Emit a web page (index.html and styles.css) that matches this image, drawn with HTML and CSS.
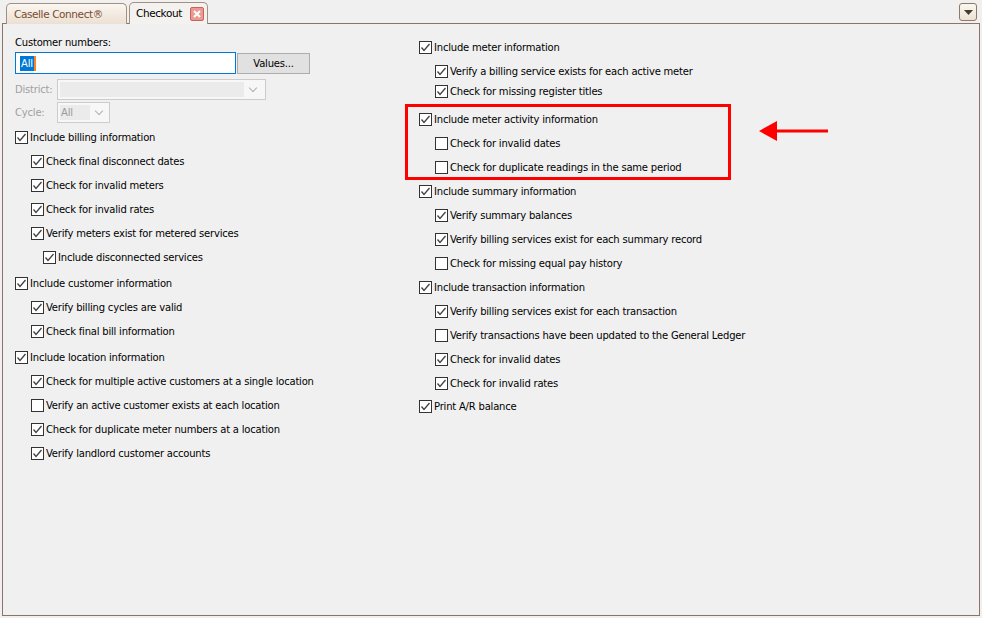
FILE: index.html
```html
<!DOCTYPE html>
<html lang="en">
<head>
    <meta charset="UTF-8">
    <title>Checkout</title>
    <link rel="stylesheet" href="styles.css">
</head>
<body>
    <div class="tabstrip">
        <div class="tab">Caselle Connect®</div>
        <div class="tab active">
            Checkout
            <svg class="close" width="14" height="14" viewBox="0 0 14 14">
                <rect x="0.5" y="0.5" width="13" height="13" rx="1.5" fill="#eb9a93" stroke="#c4645c"/>
                <path d="M4 4 L10 10 M10 4 L4 10" stroke="#fff" stroke-width="2"/>
            </svg>
        </div>
        <div class="menu-btn">
            <svg width="9" height="6" viewBox="0 0 9 6"><path d="M0 0 H9 L4.5 5 Z" fill="#4a3a30"/></svg>
        </div>
    </div>

    <div class="panel">
        <div class="col left">
            <div class="field-label">Customer numbers:</div>
            <div class="input-row">
                <div class="textbox"><span class="sel">All</span><span class="caret"></span></div>
                <button class="btn">Values...</button>
            </div>
            <div class="combo-row district">
                <span class="dim">District:</span>
                <div class="combo wide"><div class="combo-fill"></div><span class="chev"></span></div>
            </div>
            <div class="combo-row cycle">
                <span class="dim">Cycle:</span>
                <div class="combo small"><div class="combo-fill">All</div><span class="chev"></span></div>
            </div>

            <div class="checks">
                <label class="chk on">Include billing information</label>
                <label class="chk on l1">Check final disconnect dates</label>
                <label class="chk on l1">Check for invalid meters</label>
                <label class="chk on l1">Check for invalid rates</label>
                <label class="chk on l1">Verify meters exist for metered services</label>
                <label class="chk on l2">Include disconnected services</label>
                <label class="chk on group">Include customer information</label>
                <label class="chk on l1">Verify billing cycles are valid</label>
                <label class="chk on l1">Check final bill information</label>
                <label class="chk on group">Include location information</label>
                <label class="chk on l1">Check for multiple active customers at a single location</label>
                <label class="chk l1">Verify an active customer exists at each location</label>
                <label class="chk on l1">Check for duplicate meter numbers at a location</label>
                <label class="chk on l1">Verify landlord customer accounts</label>
            </div>
        </div>

        <div class="col right">
            <label class="chk on">Include meter information</label>
            <label class="chk on l1">Verify a billing service exists for each active meter</label>
            <label class="chk on l1 tight">Check for missing register titles</label>
            <label class="chk on wide-gap">Include meter activity information</label>
            <label class="chk l1">Check for invalid dates</label>
            <label class="chk l1">Check for duplicate readings in the same period</label>
            <label class="chk on">Include summary information</label>
            <label class="chk on l1">Verify summary balances</label>
            <label class="chk on l1">Verify billing services exist for each summary record</label>
            <label class="chk l1">Check for missing equal pay history</label>
            <label class="chk on">Include transaction information</label>
            <label class="chk on l1">Verify billing services exist for each transaction</label>
            <label class="chk l1">Verify transactions have been updated to the General Ledger</label>
            <label class="chk on l1">Check for invalid dates</label>
            <label class="chk on l1">Check for invalid rates</label>
            <label class="chk on last">Print A/R balance</label>
        </div>

        <!-- annotation drawn over the form -->
        <div class="highlight"></div>
        <svg class="arrow" width="72" height="22" viewBox="0 0 72 22">
            <path d="M16 11 H70" stroke="#ff0000" stroke-width="3"/>
            <path d="M1 11 L19 1 V21 Z" fill="#ff0000"/>
        </svg>
    </div>
</body>
</html>
```

FILE: styles.css
```css
body {
    margin: 0;
    background-color: #f0f0f0;
    font-family: "DejaVu Sans", Verdana, sans-serif;
    font-size: 10px;
    letter-spacing: -0.2px;
    color: #000;
}

.tabstrip {
    display: flex;
    align-items: flex-end;
    height: 23px;
    padding-left: 6px;
    gap: 2px;
}

.tab {
    position: relative;
    z-index: 1;
    height: 19px;
    margin-bottom: -1px;
    padding: 0 0 1px 7px;
    display: flex;
    align-items: center;
    font-size: 10.5px;
    letter-spacing: -0.4px;
    color: #7a4b33;
    background: linear-gradient(#faf6f0, #ebe0d2);
    border: 1px solid #a48f80;
    border-bottom: none;
    border-radius: 5px 5px 0 0;
    width: 112px;
}

.tab.active {
    width: auto;
    height: 20px;
    padding: 0 3px 1px 6px;
    color: #000;
    background: #f4f2ef;
}

.tab .close {
    margin-left: 8px;
    margin-top: 2px;
}

.menu-btn {
    margin-left: auto;
    margin-right: 5px;
    margin-bottom: 2px;
    width: 16px;
    height: 16px;
    display: flex;
    align-items: center;
    justify-content: center;
    background: linear-gradient(#fbf7f0, #ece2d3);
    border: 1px solid #8e786a;
    border-radius: 3px;
}

.menu-btn svg {
    margin-top: 1px;
}

.panel {
    position: relative;
    display: flex;
    margin-left: 2px;
    width: 964px;
    height: 591px;
    border: 1px solid #8c7565;
    padding: 0 0 0 12px;
}

.col {
    display: flex;
    flex-direction: column;
}

.left {
    width: 404px;
    padding-top: 12px;
}

.right {
    padding-top: 13px;
    gap: 4px;
}

.field-label {
    height: 14px;
    line-height: 14px;
}

.input-row {
    display: flex;
    margin-top: 2px;
    height: 22px;
}

.textbox {
    width: 215px;
    height: 20px;
    border: 1px solid #0078d7;
    background: #fff;
    display: flex;
    align-items: center;
    padding-left: 4px;
}

.sel {
    background: #0078d7;
    color: #fff;
    line-height: 15px;
    padding: 0 1px;
}

.caret {
    width: 2px;
    height: 15px;
    background: #f08a24;
}

.btn {
    margin-left: 1px;
    margin-top: 1px;
    width: 73px;
    height: 21px;
    background: #e1e1e1;
    border: 1px solid #adadad;
    font-family: inherit;
    font-size: inherit;
    letter-spacing: inherit;
    color: #000;
    padding: 0;
}

.combo-row {
    display: flex;
    align-items: center;
    height: 21px;
    margin-top: 2px;
}

.combo-row.district {
    margin-top: 5px;
}

.dim {
    width: 42px;
    color: #a0a0a0;
}

.combo {
    height: 19px;
    border: 1px solid #cccccc;
    background: #f7f7f7;
    display: flex;
    align-items: center;
    padding-left: 2px;
}

.combo.wide {
    width: 205px;
}

.combo.small {
    width: 49px;
}

.combo-fill {
    background: #ebebeb;
    height: 15px;
    line-height: 15px;
    color: #9a9a9a;
    padding-left: 1px;
}

.wide .combo-fill {
    width: 183px;
}

.small .combo-fill {
    width: 29px;
}

.chev {
    width: 5px;
    height: 5px;
    border-right: 1px solid #b0b0b0;
    border-bottom: 1px solid #b0b0b0;
    transform: rotate(45deg);
    margin: -4px 0 0 6px;
}

.checks {
    display: flex;
    flex-direction: column;
    gap: 4px;
    margin-top: 4px;
}

.chk {
    height: 20px;
    display: flex;
    align-items: center;
    gap: 2px;
    white-space: nowrap;
}

.chk::before {
    content: "";
    width: 11px;
    height: 11px;
    flex: none;
    border: 1px solid #333;
    background: #fff;
}

.chk.on::before {
    background: #fff url("data:image/svg+xml,%3Csvg xmlns='http://www.w3.org/2000/svg' width='11' height='11'%3E%3Cpath d='M1.5 5.5 L4 8.5 L9.5 2' fill='none' stroke='%23404040' stroke-width='1.3'/%3E%3C/svg%3E") no-repeat;
}

.l1 {
    padding-left: 16px;
}

.l2 {
    padding-left: 28px;
}

.group {
    margin-top: 2px;
}

.tight {
    margin-top: -4px;
}

.wide-gap {
    margin-top: 4px;
}

.last {
    margin-top: -1px;
}

.highlight {
    position: absolute;
    left: 402px;
    top: 80px;
    width: 320px;
    height: 70px;
    border: 3px solid #ff0000;
}

.arrow {
    position: absolute;
    left: 755px;
    top: 96px;
}
```
